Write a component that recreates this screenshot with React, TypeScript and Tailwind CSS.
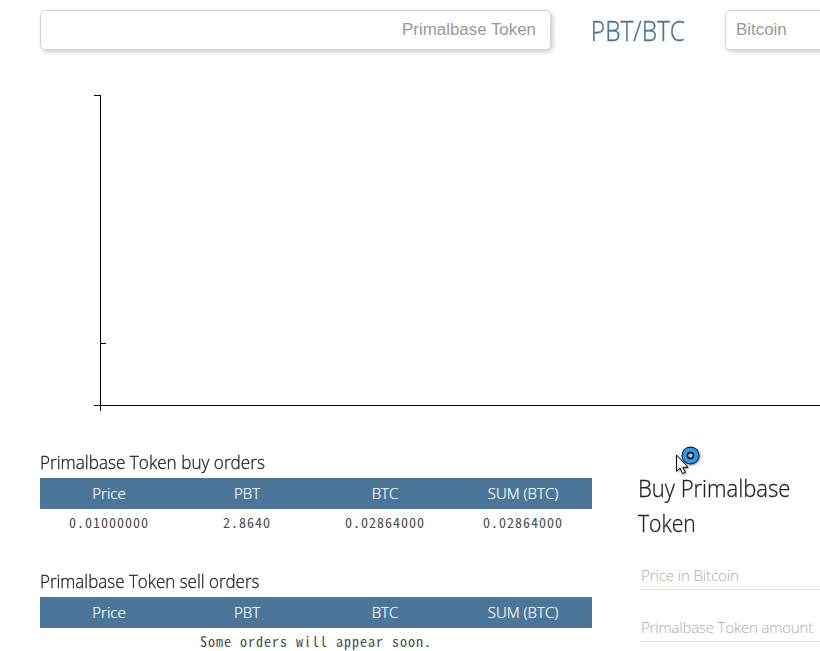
import React from "react";

const sans = "font-['Open_Sans','Noto_Sans',sans-serif]";
const mono = "font-['Noto_Sans_Mono_CJK_SC','Liberation_Mono',monospace]";

function Orders({ title, row }: { title: string; row?: string[] }) {
  return (
    <section className="h-[119px] w-[552px]">
      <h2 className="h-[28px] text-[18.5px] leading-[23px] font-light whitespace-nowrap text-[#222] [-webkit-text-stroke:0.3px_#222]">
        <span className={row ? "inline-block origin-left scale-x-[0.927]" : "inline-block origin-left scale-x-[0.917]"}>{title}</span>
      </h2>
      <div className="grid h-[31px] grid-cols-4 bg-[#4b7599] text-center text-[15px] leading-[31px] font-light text-white [-webkit-text-stroke:0.2px_#fff]">
        {["Price", "PBT", "BTC", "SUM (BTC)"].map((t) => (
          <span key={t}>{t}</span>
        ))}
      </div>
      {row ? (
        <div className={`grid h-[29px] grid-cols-4 text-center text-[14px] leading-[27px] tracking-[1px] text-[#4a4a4a] ${mono}`}>
          {row.map((t, i) => (
            <span key={i}>{t}</span>
          ))}
        </div>
      ) : (
        <p className={`h-[29px] text-center text-[14px] leading-[27px] tracking-[1px] text-[#4a4a4a] ${mono}`}>
          Some orders will appear soon.
        </p>
      )}
    </section>
  );
}

export default function App() {
  return (
    <div className={`h-[651px] w-[820px] overflow-hidden bg-white ${sans}`}>
      <header className="flex h-[95px] w-[1200px] pt-[10px] pl-10">
        <div className="h-[40px] w-[511px] rounded-[5px] border border-[#d3d3d3] pr-[14px] text-right font-['Liberation_Sans',Arial,sans-serif] text-[16.9px] leading-[37px] text-[#999] shadow-[2px_2px_4px_#ccc]">
          Primalbase Token
        </div>
        <div className="flex w-[174px] justify-center pr-px text-[27.5px] leading-[41px] font-light text-[#4b7599] [-webkit-text-stroke:0.4px_#4b7599]">
          <span className="inline-block scale-x-[0.89]">PBT/BTC</span>
        </div>
        <div className="h-[40px] w-[400px] rounded-[5px] border border-[#d3d3d3] pl-[10px] font-['Liberation_Sans',Arial,sans-serif] text-[16.9px] leading-[37px] text-[#999] shadow-[2px_2px_4px_#ccc]">
          Bitcoin
        </div>
      </header>
      <svg className="block h-[355px] w-[820px]" viewBox="0 95 820 355" shapeRendering="crispEdges" fill="none" stroke="#000">
        <path d="M94 95.5H100.5V411M100 343.5H106M94 405.5H820" />
      </svg>
      <main className="flex">
        <div className="w-[598px] pl-10">
          <Orders title="Primalbase Token buy orders" row={["0.01000000", "2.8640", "0.02864000", "0.02864000"]} />
          <Orders title="Primalbase Token sell orders" />
        </div>
        <div className="relative w-[222px] pt-[20px] pl-10">
          <svg className="absolute top-[-6px] left-[73px] h-[36px] w-[36px] drop-shadow-[1px_1px_1px_#0006]" viewBox="671 444 36 36">
            <circle cx="690.5" cy="455.5" r="9" fill="#000" />
            <circle cx="690.5" cy="455.5" r="5.9" fill="none" stroke="#269bf5" strokeWidth="4.4" />
            <circle cx="690.5" cy="455.5" r="2.3" fill="#bbb" />
            <path d="M676.5 455V471.2L680 468L682.5 473.5L685.3 472.4L682.8 467.3H688Z" fill="#fff" stroke="#000" />
          </svg>
          <h2 className="text-[24px] leading-[35px] font-light text-[#222] [-webkit-text-stroke:0.3px_#222]">
            <span className="inline-block origin-left scale-x-[0.918] whitespace-nowrap">Buy Primalbase</span>
            <br />
            <span className="inline-block origin-left scale-x-[0.88]">Token</span>
          </h2>
          <div className="mt-[22px] ml-[2px] h-[28px] border-b border-[#ddd] pl-px text-[15px] leading-[27px] font-light tracking-[-0.1px] whitespace-nowrap text-[#aaa]">Price in Bitcoin</div>
          <div className="mt-[24px] ml-[2px] h-[28px] border-b border-[#ddd] pl-px text-[15px] leading-[27px] font-light tracking-[-0.18px] whitespace-nowrap text-[#aaa]">Primalbase Token amount</div>
        </div>
      </main>
    </div>
  );
}
